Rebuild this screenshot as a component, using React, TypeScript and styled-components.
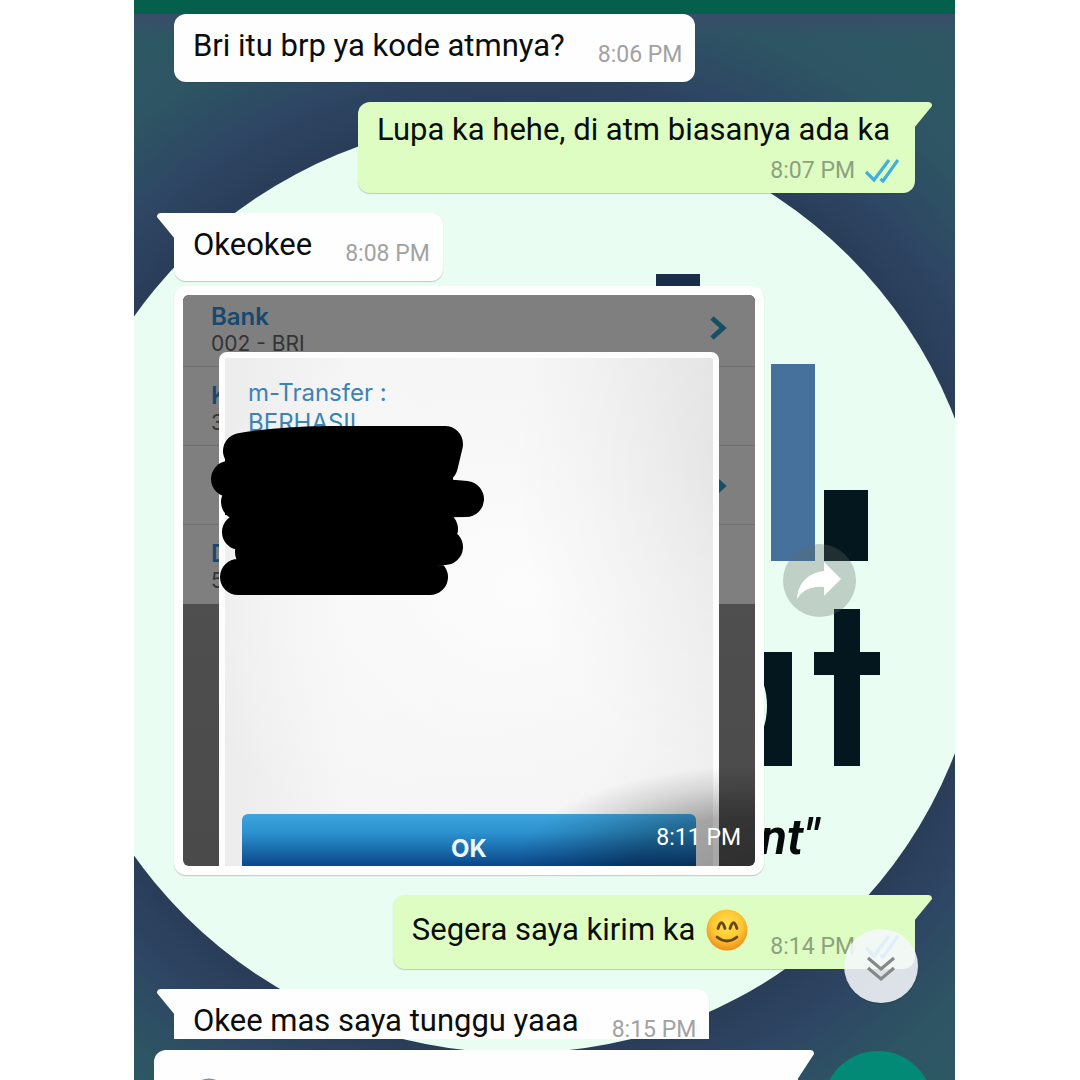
import React from "react";
import styled, { createGlobalStyle, css } from "styled-components";

const GlobalStyle = createGlobalStyle`
  *, *::before, *::after { box-sizing: border-box; }
  body { margin: 0; background: #ffffff; font-family: Roboto, "Liberation Sans", sans-serif; }
  button, input { font: inherit; border: 0; padding: 0; margin: 0; background: none; }
  p, h2 { margin: 0; font: inherit; }
`;

const Page = styled.div`
  padding: 0 125px 0 134px;
`;

const Screen = styled.main`
  display: grid;
  grid-template: 100vh / 100%;
  overflow: hidden;
  background: #2d5563;
`;

const Wallpaper = styled.svg`
  grid-area: 1 / 1;
  width: 100%;
  height: 100%;
`;

const WallpaperCaption = styled.text`
  font-family: Roboto, sans-serif;
  font-size: 50px;
  font-style: italic;
  font-weight: 600;
  fill: #050b0c;
`;

const Conversation = styled.div`
  grid-area: 1 / 1;
  z-index: 1;
  display: flex;
  flex-direction: column;
  min-height: 0;
`;

const TopBar = styled.header`
  flex: none;
  height: 14px;
  background: #045f4d;
`;

const Chat = styled.section`
  position: relative;
  flex: 1;
  min-height: 0;
  overflow: hidden;
  padding: 0 40px;
  display: flex;
  flex-direction: column;
  gap: 20px;
`;

const Group = styled.div`
  display: flex;
  flex-direction: column;
  gap: 5px;
`;

const Row = styled.div<{ $sent?: boolean }>`
  flex: none;
  display: flex;
  align-items: center;
  gap: 19px;
  justify-content: ${(p) => (p.$sent ? "flex-end" : "flex-start")};
`;

const tailLeft = css`
  border-top-left-radius: 0;
  &::before {
    content: "";
    position: absolute;
    top: 0;
    left: -17px;
    width: 18px;
    height: 26px;
    background: inherit;
    border-top-left-radius: 4px;
    clip-path: polygon(0 0, 100% 0, 100% 100%, 0 4px);
  }
`;

const tailRight = css`
  border-top-right-radius: 0;
  &::before {
    content: "";
    position: absolute;
    top: 0;
    right: -17px;
    width: 18px;
    height: 26px;
    background: inherit;
    border-top-right-radius: 4px;
    clip-path: polygon(0 0, 100% 0, 100% 4px, 0 100%);
  }
`;

const Bubble = styled.article<{ $sent?: boolean; $tail?: boolean; $stacked?: boolean }>`
  position: relative;
  display: flex;
  flex-direction: ${(p) => (p.$stacked ? "column" : "row")};
  align-items: flex-end;
  gap: ${(p) => (p.$stacked ? 9 : p.$sent ? 22 : 33)}px;
  padding: ${(p) => (p.$stacked ? "10px 16px 8px 19px" : p.$sent ? "14px 16px 8px 19px" : "14px 13px 13px 19px")};
  border-radius: 12px;
  background: ${(p) => (p.$sent ? "#defdc2" : "#fefefe")};
  box-shadow: 0 1px 1px rgba(40, 60, 50, 0.25);
  ${(p) => p.$tail && (p.$sent ? tailRight : tailLeft)}
`;

const Text = styled.p<{ $sent?: boolean; $stacked?: boolean }>`
  display: flex;
  align-items: center;
  gap: 11px;
  font-size: 31px;
  line-height: 36px;
  white-space: nowrap;
  color: #0a0d0a;
  padding: ${(p) => (p.$stacked ? "0 9px 0 0" : p.$sent ? "0 0 10px" : "0 0 5px")};
`;

const Meta = styled.span<{ $sent?: boolean }>`
  display: flex;
  align-items: center;
  gap: 10px;
  font-size: 23px;
  line-height: 28px;
  white-space: nowrap;
  color: ${(p) => (p.$sent ? "#8da17e" : "#a2a2a2")};
`;

const MediaBubble = styled(Bubble)`
  padding: 9px;
`;

const Photo = styled.div`
  position: relative;
  width: 572px;
  aspect-ratio: 572 / 571;
  overflow: hidden;
  border-radius: 6px;
  background: linear-gradient(#545454, #4a4a4a);
  display: grid;
  grid-template: 100% / 100%;
`;

const BankForm = styled.div`
  grid-area: 1 / 1;
  align-self: start;
  font-family: Inter, Roboto, sans-serif;
`;

const Field = styled.div<{ $first?: boolean }>`
  display: flex;
  justify-content: space-between;
  align-items: flex-end;
  height: ${(p) => (p.$first ? 72 : 79)}px;
  padding: 0 28px 9px;
  background: #7f7f7f;
  border-bottom: 1px solid #707070;
  &:last-child { border-bottom-color: #7f7f7f; }
`;

const FieldText = styled.div`
  font-size: 21px;
  line-height: 27px;
  color: #343434;
`;

const FieldLabel = styled.div`
  font-size: 24px;
  font-weight: 600;
  color: #17486f;
`;

const FieldArrow = styled.svg`
  width: 17px;
  height: 24px;
  margin-bottom: 17px;
`;

const Dialog = styled.div`
  grid-area: 1 / 1;
  z-index: 1;
  margin: 57px 36px 0;
  height: 536px;
  border: 6px solid #fdfdfd;
  border-radius: 8px;
  padding: 20px 17px 0;
  display: flex;
  flex-direction: column;
  justify-content: space-between;
  font-family: Inter, Roboto, sans-serif;
  background:
    radial-gradient(ellipse 220px 300px at 104% 22%, rgba(0, 0, 0, 0.05), transparent),
    radial-gradient(ellipse 360px 280px at 60% 44%, #fcfcfc, rgba(252, 252, 252, 0)),
    linear-gradient(90deg, #ececec, #f5f5f5 25%, #f3f3f3 75%, #ececec);
`;

const DialogText = styled.p`
  padding-left: 6px;
  font-size: 24px;
  line-height: 30px;
  color: #3b83b5;
`;

const OkButton = styled.button`
  && {
    height: 68px;
    flex: none;
    border-radius: 6px;
    font-size: 24px;
    font-weight: 700;
    color: #eef8ff;
    background: linear-gradient(#3ea4de, #2d93d0 18px, #0b4b8e 50px, #083f7c);
  }
`;

const Scribble = styled.svg`
  position: absolute;
  inset: 0;
  z-index: 2;
  width: 100%;
  height: 100%;
`;

const PhotoMeta = styled.div`
  position: absolute;
  z-index: 3;
  right: 0;
  bottom: 0;
  width: 240px;
  height: 100px;
  padding: 0 14px 14px 0;
  display: flex;
  align-items: flex-end;
  justify-content: flex-end;
  font-size: 23px;
  line-height: 28px;
  color: #ffffff;
  background: radial-gradient(ellipse 100% 100% at 100% 100%, rgba(0, 0, 0, 0.36), rgba(0, 0, 0, 0.3) 50%, rgba(0, 0, 0, 0.1) 80%, transparent);
`;

const ForwardButton = styled.button`
  && {
    flex: none;
    width: 73px;
    height: 73px;
    border-radius: 50%;
    background: rgba(95, 105, 100, 0.3);
  }
`;

const ScrollButton = styled.button`
  && {
    position: absolute;
    right: 37px;
    bottom: 36px;
    width: 74px;
    height: 74px;
    border-radius: 50%;
    background: rgba(245, 247, 250, 0.88);
    box-shadow: 0 1px 1px rgba(0, 0, 0, 0.15);
  }
`;

const Footer = styled.form`
  flex: none;
  height: 41px;
  padding: 11px 22px 0 20px;
  display: flex;
  gap: 25px;
  align-items: flex-start;
  overflow: hidden;
`;

const Composer = styled.div`
  position: relative;
  flex: 1;
  display: flex;
  gap: 16px;
  height: 86px;
  padding: 28px 24px 20px 36px;
  border-radius: 12px 0 12px 12px;
  background: #fefefe;
  &::before {
    content: "";
    position: absolute;
    top: 0;
    right: -16px;
    width: 17px;
    height: 30px;
    background: inherit;
    border-top-right-radius: 4px;
    clip-path: polygon(0 0, 100% 0, 100% 4px, 0 100%);
  }
`;

const EmojiButton = styled.button`
  width: 38px;
  height: 38px;
`;

const MessageInput = styled.input`
  flex: 1;
  min-width: 0;
  height: 38px;
  outline: 0;
`;

const MicButton = styled.button`
  && {
    flex: none;
    width: 110px;
    height: 110px;
    margin-top: 1px;
    border-radius: 50%;
    background: #028a76;
  }
`;

const Ticks = () => (
  <svg width="34" height="24" viewBox="0 0 34 24" fill="none" stroke="#42aee0" strokeWidth="3.2" aria-label="Read" role="img">
    <path d="M1 13 L9 21 L24 1" />
    <path d="M15.500 20 L18 22 L33 1" />
  </svg>
);

const Smile = () => (
  <svg width="42" height="42" viewBox="0 0 42 42" role="img" aria-label="😊">
    <defs>
      <radialGradient id="smileFace" cx="50%" cy="38%" r="62%">
        <stop offset="0" stopColor="#fde34f" />
        <stop offset="0.6" stopColor="#fbc632" />
        <stop offset="1" stopColor="#ee8c1c" />
      </radialGradient>
    </defs>
    <circle cx="21" cy="21" r="20.500" fill="url(#smileFace)" />
    <g fill="none" stroke="#6b4410" strokeWidth="2.800" strokeLinecap="round">
      <path d="M12 19.500 Q15.500 8 19 19.500" />
      <path d="M24 19.500 Q27.500 8 31 19.500" />
      <path d="M11 28 Q21 36 31 28" />
    </g>
  </svg>
);

const Arrow = () => (
  <FieldArrow viewBox="0 0 17 24" fill="none" stroke="#175066" strokeWidth="5">
    <path d="M2 2 L13 12 L2 22" />
  </FieldArrow>
);

const ChatWallpaper = () => (
  <Wallpaper viewBox="0 0 821 1080" preserveAspectRatio="xMidYMid slice" aria-hidden="true">
    <defs>
      <radialGradient id="sky" gradientUnits="userSpaceOnUse" cx="382" cy="586" r="680">
        <stop offset="0.680" stopColor="#293c58" />
        <stop offset="0.780" stopColor="#2e4764" />
        <stop offset="0.880" stopColor="#2d5563" />
        <stop offset="1" stopColor="#2e5763" />
      </radialGradient>
      <linearGradient id="topHaze" x1="0" y1="0" x2="0" y2="1">
        <stop offset="0" stopColor="#3a4c69" />
        <stop offset="1" stopColor="#3a4c69" stopOpacity="0" />
      </linearGradient>
    </defs>
    <rect width="821" height="1080" fill="url(#sky)" />
    <rect y="14" width="821" height="22" fill="url(#topHaze)" />
    <ellipse cx="383" cy="586" rx="469" ry="467" fill="#e9fdf2" />
    <rect x="522" y="274" width="44" height="60" fill="#1a2e4a" />
    <rect x="637" y="364" width="44" height="197" fill="#46719d" />
    <rect x="690" y="490" width="44" height="71" fill="#04161e" />
    <g fill="#04161e">
      <rect x="610" y="652" width="48" height="114" />
      <rect x="700" y="609" width="26" height="157" />
      <rect x="680" y="652" width="66" height="23" />
    </g>
    <ellipse cx="620" cy="706" rx="13" ry="32" fill="#e9fdf2" />
    <WallpaperCaption x="626" y="854">nt"</WallpaperCaption>
  </Wallpaper>
);

type MessageProps = {
  text: string;
  time: string;
  sent?: boolean;
  tail?: boolean;
  stacked?: boolean;
  smile?: boolean;
};

const Message = ({ text, time, sent, tail, stacked, smile }: MessageProps) => (
  <Row $sent={sent}>
    <Bubble $sent={sent} $tail={tail} $stacked={stacked}>
      <Text $sent={sent} $stacked={stacked}>
        {text}
        {smile && <Smile />}
      </Text>
      <Meta $sent={sent}>
        <time>{time}</time>
        {sent && <Ticks />}
      </Meta>
    </Bubble>
  </Row>
);

const TransferPhoto = () => (
  <Photo>
    <BankForm>
      <Field $first>
        <FieldText>
          <FieldLabel>Bank</FieldLabel>
          002 - BRI
        </FieldText>
        <Arrow />
      </Field>
      <Field>
        <FieldText>
          <FieldLabel>K</FieldLabel>3
        </FieldText>
      </Field>
      <Field>
        <FieldText />
        <Arrow />
      </Field>
      <Field>
        <FieldText>
          <FieldLabel>D</FieldLabel>5
        </FieldText>
      </Field>
    </BankForm>
    <Dialog>
      <DialogText>
        m-Transfer :<br />
        BERHASIL
      </DialogText>
      <OkButton type="button">OK</OkButton>
    </Dialog>
    <Scribble viewBox="0 0 572 571" aria-hidden="true">
      <path
        d="M58 156 Q100 149 150 149 L262 149 L257 170 L46 184 L283 204 L56 207 L257 234 L57 237 L262 252 L70 257 L247 282 L55 282"
        fill="none"
        stroke="#000"
        strokeWidth="36"
        strokeLinecap="round"
        strokeLinejoin="round"
      />
      <path d="M42 160 H270 V188 H283 V221 H262 V270 H56 V250 H50 V220 H42 Z" fill="#000" />
    </Scribble>
    <PhotoMeta>
      <time>8:11 PM</time>
    </PhotoMeta>
  </Photo>
);

export default function App() {
  return (
    <Page>
      <GlobalStyle />
      <Screen>
        <ChatWallpaper />
        <Conversation>
          <TopBar />
          <Chat>
            <Message text="Bri itu brp ya kode atmnya?" time="8:06 PM" />
            <Message text="Lupa ka hehe, di atm biasanya ada ka" time="8:07 PM" sent tail stacked />
            <Group>
              <Message text="Okeokee" time="8:08 PM" tail />
              <Row>
                <MediaBubble>
                  <TransferPhoto />
                </MediaBubble>
                <ForwardButton type="button" aria-label="Forward">
                  <svg width="73" height="73" viewBox="0 0 73 73" fill="#fff">
                    <path d="M58 35 L41 18 V27 C26 29 15 38 14 55 C20 45 30 42 41 43 V52 Z" />
                  </svg>
                </ForwardButton>
              </Row>
            </Group>
            <Message text="Segera saya kirim ka" time="8:14 PM" sent tail smile />
            <Message text="Okee mas saya tunggu yaaa" time="8:15 PM" tail />
            <ScrollButton type="button" aria-label="Scroll to latest">
              <svg width="74" height="74" viewBox="0 0 74 74" fill="none" stroke="#858987" strokeWidth="3.200">
                <path d="M24 29 L37 40 L50 29" />
                <path d="M24 39 L37 50 L50 39" />
              </svg>
            </ScrollButton>
          </Chat>
          <Footer>
            <Composer>
              <EmojiButton type="button" aria-label="Emoji">
                <svg width="38" height="38" viewBox="0 0 38 38" fill="none" stroke="#8b8f92" strokeWidth="3">
                  <circle cx="19" cy="19" r="17" />
                  <path d="M11 22 Q19 31 27 22" />
                </svg>
              </EmojiButton>
              <MessageInput type="text" aria-label="Message" />
            </Composer>
            <MicButton type="button" aria-label="Record voice message" />
          </Footer>
        </Conversation>
      </Screen>
    </Page>
  );
}
